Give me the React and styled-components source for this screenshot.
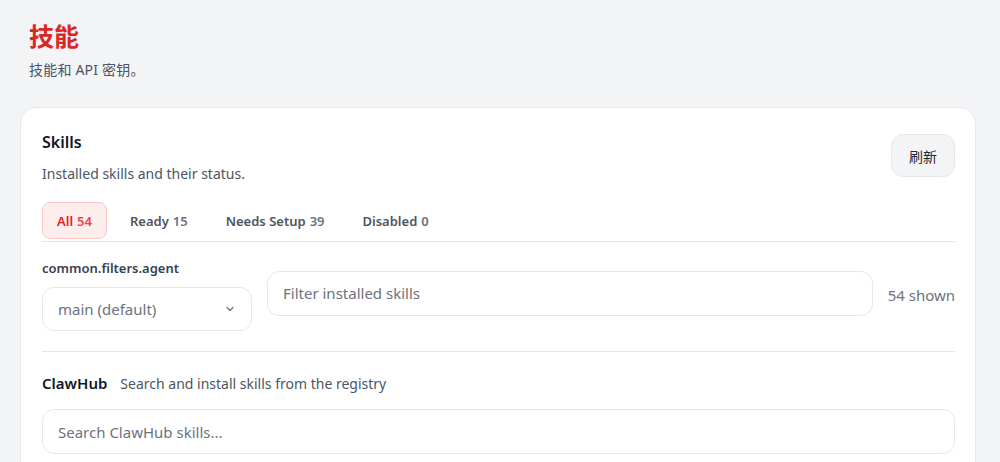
import React from "react";
import styled, { createGlobalStyle } from "styled-components";

const Global = createGlobalStyle`
  html, body { margin: 0; padding: 0; background: #f3f4f6; }
  body { font-family: "Noto Sans", "Noto Sans CJK SC", sans-serif; color: #111827; }
  * { box-sizing: border-box; }
`;

const Page = styled.div`
  padding: 20px 24px 0 20px;
`;

const Header = styled.header`
  padding-left: 9px;
  margin-bottom: 27px;
`;

const Title = styled.h1`
  margin: 0 0 8px;
  font-size: 25px;
  line-height: 32px;
  font-weight: 700;
  color: #dc2626;
`;

const Subtitle = styled.p`
  margin: 0;
  font-size: 14px;
  line-height: 20px;
  letter-spacing: 0.2px;
  color: #4b5563;
`;

const Card = styled.section`
  background: #fff;
  border: 1px solid #e5e7eb;
  border-radius: 16px;
  padding: 22px 20px 40px 21px;
`;

const CardHead = styled.div`
  display: flex;
  align-items: center;
  justify-content: space-between;
`;

const CardTitle = styled.h2`
  margin: 0 0 10px;
  font-size: 16px;
  line-height: 24px;
  font-weight: 600;
  color: #111827;
`;

const CardDesc = styled.p`
  margin: 0;
  font-size: 14px;
  line-height: 20px;
  color: #4b5563;
`;

const Button = styled.button`
  font-family: inherit;
  font-size: 14px;
  color: #1f2937;
  background: #f3f4f6;
  border: 1px solid #e5e7eb;
  border-radius: 12px;
  width: 64px;
  height: 43px;
  margin-top: -3px;
  cursor: pointer;
`;

const Tabs = styled.div`
  display: flex;
  gap: 8px;
  margin-top: 18px;
  padding-bottom: 2px;
  border-bottom: 1px solid #e5e7eb;
`;

const Tab = styled.button`
  font-family: inherit;
  font-size: 13px;
  font-weight: 600;
  height: 37px;
  padding: 0 14px;
  border-radius: 8px;
  border: 1px solid ${(p) => (p.$active ? "#fbc7c7" : "transparent")};
  background: ${(p) => (p.$active ? "#fdeded" : "transparent")};
  color: ${(p) => (p.$active ? "#dc2626" : "#4b5563")};
  display: flex;
  align-items: center;
  gap: 4px;
`;

const Count = styled.span`
  color: ${(p) => (p.$active ? "#ef4444" : "#6b7280")};
`;

const FilterRow = styled.div`
  display: flex;
  align-items: center;
  gap: 15px;
  margin-top: 17px;
  padding-bottom: 20px;
  border-bottom: 1px solid #e5e7eb;
`;

const Field = styled.div`
  display: flex;
  flex-direction: column;
  gap: 10px;
  width: 210px;
`;

const Label = styled.label`
  font-size: 13px;
  line-height: 18px;
  font-weight: 600;
  color: #374151;
`;

const Select = styled.div`
  height: 44px;
  border: 1px solid #e5e7eb;
  border-radius: 12px;
  display: flex;
  align-items: center;
  justify-content: space-between;
  padding: 0 15px 0 15px;
  font-size: 15px;
  color: #6b7280;
`;

const Input = styled.input`
  font-family: inherit;
  font-size: 15px;
  height: 45px;
  border: 1px solid #e5e7eb;
  border-radius: 12px;
  padding: 0 15px;
  flex: 1;
  width: 100%;
  color: #111827;
  outline: none;
  &::placeholder { color: #6b7280; }
`;

const FilterInput = styled(Input)`
  margin-top: -4px;
`;

const Shown = styled.span`
  font-size: 15px;
  color: #6b7280;
  white-space: nowrap;
`;

const HubHead = styled.div`
  display: flex;
  align-items: baseline;
  gap: 13px;
  margin-top: 21px;
  margin-bottom: 15px;
  line-height: 20px;
`;

const HubTitle = styled.span`
  font-size: 15px;
  font-weight: 600;
  color: #111827;
`;

const HubDesc = styled.span`
  font-size: 14px;
  color: #4b5563;
`;

const Chevron = () => (
  <svg width="12" height="12" viewBox="0 0 24 24" fill="none" stroke="#6b7280" strokeWidth="2.5" strokeLinecap="round" strokeLinejoin="round">
    <path d="M6 9l6 6 6-6" />
  </svg>
);

const tabs = [
  ["All", 54],
  ["Ready", 15],
  ["Needs Setup", 39],
  ["Disabled", 0],
];

export default function App() {
  return (
    <Page>
      <Global />
      <Header>
        <Title>技能</Title>
        <Subtitle>技能和 API 密钥。</Subtitle>
      </Header>
      <Card>
        <CardHead>
          <div>
            <CardTitle>Skills</CardTitle>
            <CardDesc>Installed skills and their status.</CardDesc>
          </div>
          <Button>刷新</Button>
        </CardHead>
        <Tabs>
          {tabs.map(([name, n], i) => (
            <Tab key={name} $active={i === 0}>
              {name} <Count $active={i === 0}>{n}</Count>
            </Tab>
          ))}
        </Tabs>
        <FilterRow>
          <Field>
            <Label>common.filters.agent</Label>
            <Select>
              <span>main (default)</span>
              <Chevron />
            </Select>
          </Field>
          <FilterInput placeholder="Filter installed skills" />
          <Shown>54 shown</Shown>
        </FilterRow>
        <HubHead>
          <HubTitle>ClawHub</HubTitle>
          <HubDesc>Search and install skills from the registry</HubDesc>
        </HubHead>
        <Input placeholder="Search ClawHub skills..." />
      </Card>
    </Page>
  );
}
